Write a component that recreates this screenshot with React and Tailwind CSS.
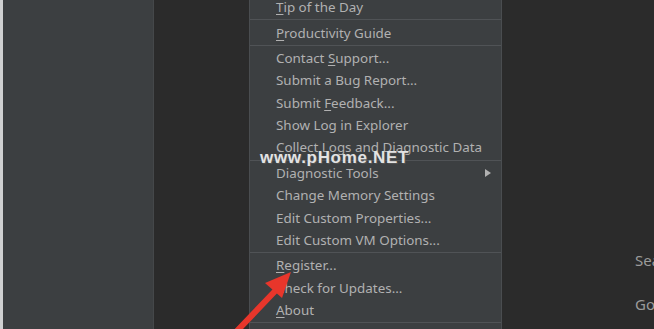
import React from "react";

const items = [
  { type: "item", label: "Tip of the Day", u: 0 },
  { type: "sep" },
  { type: "item", label: "Productivity Guide", u: 0 },
  { type: "sep" },
  { type: "item", label: "Contact Support...", u: 8 },
  { type: "item", label: "Submit a Bug Report..." },
  { type: "item", label: "Submit Feedback...", u: 7 },
  { type: "item", label: "Show Log in Explorer" },
  { type: "item", label: "Collect Logs and Diagnostic Data" },
  { type: "sep" },
  { type: "item", label: "Diagnostic Tools", sub: true },
  { type: "item", label: "Change Memory Settings" },
  { type: "item", label: "Edit Custom Properties..." },
  { type: "item", label: "Edit Custom VM Options..." },
  { type: "sep" },
  { type: "item", label: "Register...", u: 0 },
  { type: "item", label: "Check for Updates..." },
  { type: "item", label: "About", u: 0 },
  { type: "sep" },
  { type: "item", label: "Licenses" },
];

const Label = ({ label, u }) => {
  if (u === undefined) return <span>{label}</span>;
  return (
    <span>
      {label.slice(0, u)}
      <span className="underline underline-offset-2">{label[u]}</span>
      {label.slice(u + 1)}
    </span>
  );
};

const App = () => {
  return (
    <div
      className="relative flex h-[329px] w-[654px] overflow-hidden bg-[#2b2b2b]"
      style={{ fontFamily: '"Noto Sans", "Open Sans", sans-serif' }}
    >
      {/* left panel */}
      <div className="w-[3px] shrink-0 bg-[#cfd0d1]" />
      <div className="w-[151px] shrink-0 border-r border-[#45484a] bg-[#3c3f41]" />

      {/* editor area behind menu */}
      <div className="w-[95px] shrink-0 bg-[#2b2b2b]" />

      {/* help menu */}
      <div className="-mt-[4px] w-[253px] shrink-0 border-x border-[#4a4d50] bg-[#3c3f41] text-[13.4px] text-[#b1b1b1]">
        {items.map((it, i) =>
          it.type === "sep" ? (
            <div key={i} className="flex h-[3px] items-center">
              <div className="h-px w-full bg-[#505356]" />
            </div>
          ) : (
            <div key={i} className="flex h-[22.4px] items-center pl-[26px] pr-[10px] whitespace-nowrap">
              <Label label={it.label} u={it.u} />
              {it.sub && (
                <svg className="ml-auto" width="6" height="8" viewBox="0 0 6 8">
                  <path d="M0 0 L6 4 L0 8 Z" fill="#b1b1b1" />
                </svg>
              )}
            </div>
          )
        )}
      </div>

      {/* right welcome area */}
      <div className="flex flex-1 flex-col gap-[21px] overflow-hidden whitespace-nowrap pl-[133px] pt-[249px] text-[15px] text-[#9b9b9b]">
        <div>Search Everywhere</div>
        <div>Go to File</div>
      </div>

      {/* watermark */}
      <div
        className="absolute left-[260px] top-[145px] text-[17px] font-bold tracking-[0.7px] text-[#e3e3e3]"
        style={{ fontFamily: '"Liberation Sans", sans-serif', textShadow: "1px 1px 1px #555" }}
      >
        www.pHome.NET
      </div>

      {/* red arrow */}
      <svg className="absolute left-0 top-0" width="654" height="329" viewBox="0 0 654 329">
        <line x1="236" y1="332" x2="278" y2="288" stroke="#e8362b" strokeWidth="6" strokeLinecap="round" />
        <polygon points="291,272 265,283 282,298" fill="#e8362b" />
      </svg>
    </div>
  );
};

export default App;
